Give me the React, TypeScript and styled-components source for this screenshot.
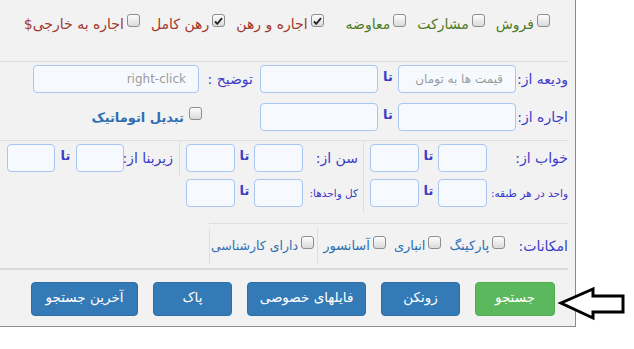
import React from "react";
import styled, { createGlobalStyle } from "styled-components";

const GlobalStyle = createGlobalStyle`
  html, body {
    margin: 0;
    padding: 0;
    background: #ffffff;
  }
  body {
    font-family: "DejaVu Sans", "Noto Sans", sans-serif;
  }
`;

const Page = styled.div`
  position: relative;
  width: 634px;
  height: 349px;
`;

const Panel = styled.div`
  direction: rtl;
  width: 576px;
  height: 327px;
  box-sizing: border-box;
  background: #f2f2f2;
  border-right: 1px solid #8c8c8c;
  border-bottom: 1px solid #8c8c8c;
  padding-right: 7px;
  display: flex;
  flex-direction: column;
`;

const TypeRow = styled.div`
  height: 62px;
  box-sizing: border-box;
  border-bottom: 1px solid #dedede;
  display: flex;
  align-items: center;
  gap: 22px;
  padding: 0 18px 13px 0;
`;

const Group = styled.div`
  display: flex;
  align-items: center;
  gap: 11px;
`;

const CheckItem = styled.label<{ $color: string; $size?: number; $bold?: boolean }>`
  display: flex;
  align-items: center;
  gap: 3px;
  color: ${(p) => p.$color};
  font-size: ${(p) => p.$size ?? 13}px;
  font-weight: ${(p) => (p.$bold ? 700 : 400)};
  white-space: nowrap;
`;

const Box = styled.span`
  width: 11px;
  height: 11px;
  border: 1px solid #8e8e8e;
  border-radius: 3px;
  background: linear-gradient(#fdfdfd, #dadada);
  display: inline-flex;
  align-items: center;
  justify-content: center;
  flex: none;
  margin-top: -7px;
`;

const PriceBlock = styled.div`
  border-bottom: 1px solid #dedede;
  padding: 3px 0 9px;
  display: flex;
  flex-direction: column;
  gap: 10px;
`;

const FieldRow = styled.div`
  display: flex;
  align-items: center;
`;

const Label = styled.div<{ $width: number; $small?: boolean }>`
  width: ${(p) => p.$width}px;
  flex: none;
  box-sizing: border-box;
  color: #3b3bc8;
  font-size: ${(p) => (p.$small ? 10.5 : 14)}px;
  white-space: nowrap;
`;

const Field = styled.input<{ $width: number }>`
  width: ${(p) => p.$width}px;
  height: 28px;
  box-sizing: border-box;
  flex: none;
  border: 1px solid #a9c6f3;
  border-radius: 4px;
  background: #f6faff;
  padding: 0 12px;
  font-family: "DejaVu Sans", "Noto Sans", sans-serif;
  font-size: 12px;
  color: #555;
  outline: none;
  &::placeholder {
    color: #9b9b9b;
  }
`;

const Ta = styled.div<{ $width: number }>`
  width: ${(p) => p.$width}px;
  flex: none;
  text-align: center;
  color: #3b3bc8;
  font-weight: 700;
  font-size: 13px;
  margin-top: -6px;
`;

const RoomBlock = styled.div`
  display: flex;
  align-items: flex-start;
  height: 82px;
`;

const RoomCol = styled.div<{ $width: number; $divider?: "left" | "right" }>`
  width: ${(p) => p.$width}px;
  flex: none;
  box-sizing: border-box;
  padding: 3px 0 5px;
  display: flex;
  flex-direction: column;
  gap: 7px;
  ${(p) => (p.$divider === "left" ? "border-left: 1px solid #dedede;" : "")}
  ${(p) => (p.$divider === "right" ? "border-right: 1px solid #dedede;" : "")}
`;

const Amenities = styled.div`
  width: 359px;
  height: 45px;
  box-sizing: border-box;
  border-top: 1px solid #dedede;
  display: flex;
  align-items: flex-start;
  padding-top: 4px;
`;

const AmenityCell = styled.div<{ $width: number }>`
  width: ${(p) => p.$width}px;
  height: 35px;
  flex: none;
  box-sizing: border-box;
  border-left: 1px solid #dedede;
  display: flex;
  align-items: center;
  gap: 8px;
  padding-right: 3px;
`;

const ButtonBar = styled.div`
  border-top: 2px solid #dadada;
  padding: 12px 13px 0 0;
  display: flex;
  gap: 15px;
`;

const Button = styled.button<{ $variant?: "success"; $width: number }>`
  width: ${(p) => p.$width}px;
  height: 34px;
  border-radius: 4px;
  border: 1px solid ${(p) => (p.$variant === "success" ? "#4cae4c" : "#2e6da4")};
  background: ${(p) => (p.$variant === "success" ? "#5cb85c" : "#337ab7")};
  color: #fff;
  font-family: "DejaVu Sans", "Noto Sans", sans-serif;
  font-size: 13.5px;
  padding: 0 0 4px;
  white-space: nowrap;
`;

const Arrow = styled.svg`
  position: absolute;
  left: 556px;
  top: 284px;
`;

const Check = ({ checked }: { checked?: boolean }) => (
  <Box>
    {checked && (
      <svg width="9" height="8" viewBox="0 0 9 8">
        <path d="M1 4.5 L3.3 6.8 L8 1.2" stroke="#222" strokeWidth="1.8" fill="none" />
      </svg>
    )}
  </Box>
);

const green = "#4f7a26";
const red = "#a1372b";
const blue = "#2d6fb2";

const App = () => {
  return (
    <Page>
      <GlobalStyle />
      <Panel>
        <TypeRow>
          <Group>
            <CheckItem $color={green} $size={14}><Check />فروش</CheckItem>
            <CheckItem $color={green} $size={14}><Check />مشارکت</CheckItem>
            <CheckItem $color={green} $size={14}><Check />معاوضه</CheckItem>
          </Group>
          <Group>
            <CheckItem $color={red} $size={14}><Check checked />اجاره و رهن</CheckItem>
            <CheckItem $color={red} $size={14}><Check checked />رهن کامل</CheckItem>
            <CheckItem $color={red} $size={14}><Check />اجاره به خارجی$</CheckItem>
          </Group>
        </TypeRow>

        <PriceBlock>
          <FieldRow>
            <Label $width={52}>ودیعه از:</Label>
            <Field $width={118} placeholder="قیمت ها به تومان" />
            <Ta $width={20}>تا</Ta>
            <Field $width={118} />
            <Label $width={61} style={{ paddingRight: 7 }}>توضیح :</Label>
            <Field $width={166} placeholder="right-click" />
          </FieldRow>
          <FieldRow>
            <Label $width={52}>اجاره از:</Label>
            <Field $width={118} />
            <Ta $width={20}>تا</Ta>
            <Field $width={118} />
            <CheckItem $color={blue} $bold style={{ marginRight: 58, gap: 5 }}>
              <Check />
              تبدیل اتوماتیک
            </CheckItem>
          </FieldRow>
        </PriceBlock>

        <RoomBlock>
          <RoomCol $width={205} $divider="left">
            <FieldRow>
              <Label $width={81}>خواب از:</Label>
              <Field $width={49} />
              <Ta $width={19}>تا</Ta>
              <Field $width={49} />
            </FieldRow>
            <FieldRow>
              <Label $width={81} $small>واحد در هر طبقه:</Label>
              <Field $width={49} />
              <Ta $width={19}>تا</Ta>
              <Field $width={49} />
            </FieldRow>
          </RoomCol>
          <RoomCol $width={183}>
            <FieldRow>
              <Label $width={60} style={{ paddingRight: 5 }}>سن از:</Label>
              <Field $width={49} />
              <Ta $width={19}>تا</Ta>
              <Field $width={49} />
            </FieldRow>
            <FieldRow>
              <Label $width={60} $small style={{ paddingRight: 5 }}>کل واحدها:</Label>
              <Field $width={49} />
              <Ta $width={19}>تا</Ta>
              <Field $width={49} />
            </FieldRow>
          </RoomCol>
          <RoomCol $width={180} $divider="right">
            <FieldRow>
              <Label $width={55} style={{ paddingRight: 6 }}>زیربنا از:</Label>
              <Field $width={48} />
              <Ta $width={21}>تا</Ta>
              <Field $width={48} />
            </FieldRow>
          </RoomCol>
        </RoomBlock>

        <Amenities>
          <AmenityCell $width={251} style={{ paddingRight: 0 }}>
            <Label $width={55}>امکانات:</Label>
            <CheckItem $color={blue} $size={13}><Check />پارکینگ</CheckItem>
            <CheckItem $color={blue} $size={13}><Check />انباری</CheckItem>
            <CheckItem $color={blue} $size={13}><Check />آسانسور</CheckItem>
          </AmenityCell>
          <AmenityCell $width={108}>
            <CheckItem $color={blue} $size={12.5}><Check />دارای کارشناسی</CheckItem>
          </AmenityCell>
        </Amenities>

        <ButtonBar>
          <Button $variant="success" $width={80}>جستجو</Button>
          <Button $width={79}>زونکن</Button>
          <Button $width={119}>فایلهای خصوصی</Button>
          <Button $width={79}>پاک</Button>
          <Button $width={107}>آخرین جستجو</Button>
        </ButtonBar>
      </Panel>

      <Arrow width="72" height="38" viewBox="556 284 72 38">
        <polygon
          points="561,303 593,289 593,296 623,296 623,312 593,312 593,318"
          fill="#fff"
          stroke="#000"
          strokeWidth="3"
          strokeLinejoin="miter"
        />
      </Arrow>
    </Page>
  );
};

export default App;
